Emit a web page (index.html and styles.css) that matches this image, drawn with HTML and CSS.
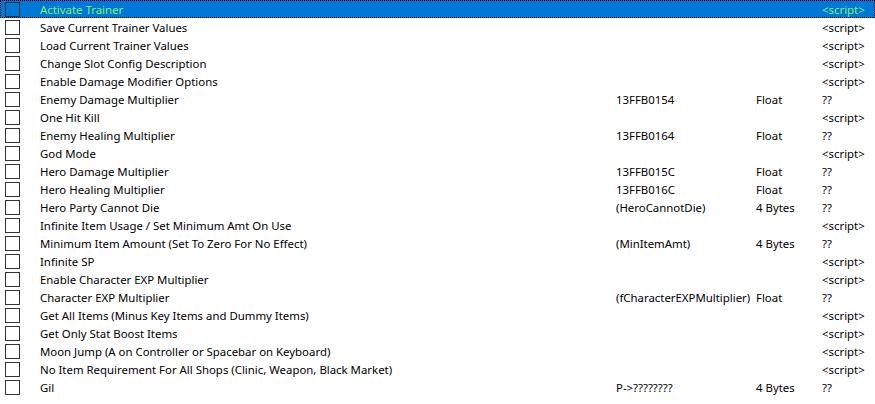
FILE: index.html
```html
<!DOCTYPE html>
<html>
<head>
<meta name="viewport" content="width=device-width, initial-scale=1">
<link rel="stylesheet" href="styles.css">
</head>
<body>
<div class="table">
  <div class="row selected"><span class="box"></span><span>Activate Trainer</span><span></span><span></span><span>&lt;script&gt;</span></div>
  <div class="row"><span class="box"></span><span>Save Current Trainer Values</span><span></span><span></span><span>&lt;script&gt;</span></div>
  <div class="row"><span class="box"></span><span>Load Current Trainer Values</span><span></span><span></span><span>&lt;script&gt;</span></div>
  <div class="row"><span class="box"></span><span>Change Slot Config Description</span><span></span><span></span><span>&lt;script&gt;</span></div>
  <div class="row"><span class="box"></span><span>Enable Damage Modifier Options</span><span></span><span></span><span>&lt;script&gt;</span></div>
  <div class="row"><span class="box"></span><span>Enemy Damage Multiplier</span><span>13FFB0154</span><span>Float</span><span>??</span></div>
  <div class="row"><span class="box"></span><span>One Hit Kill</span><span></span><span></span><span>&lt;script&gt;</span></div>
  <div class="row"><span class="box"></span><span>Enemy Healing Multiplier</span><span>13FFB0164</span><span>Float</span><span>??</span></div>
  <div class="row"><span class="box"></span><span>God Mode</span><span></span><span></span><span>&lt;script&gt;</span></div>
  <div class="row"><span class="box"></span><span>Hero Damage Multiplier</span><span>13FFB015C</span><span>Float</span><span>??</span></div>
  <div class="row"><span class="box"></span><span>Hero Healing Multiplier</span><span>13FFB016C</span><span>Float</span><span>??</span></div>
  <div class="row"><span class="box"></span><span>Hero Party Cannot Die</span><span>(HeroCannotDie)</span><span>4 Bytes</span><span>??</span></div>
  <div class="row"><span class="box"></span><span>Infinite Item Usage / Set Minimum Amt On Use</span><span></span><span></span><span>&lt;script&gt;</span></div>
  <div class="row"><span class="box"></span><span>Minimum Item Amount (Set To Zero For No Effect)</span><span>(MinItemAmt)</span><span>4 Bytes</span><span>??</span></div>
  <div class="row"><span class="box"></span><span>Infinite SP</span><span></span><span></span><span>&lt;script&gt;</span></div>
  <div class="row"><span class="box"></span><span>Enable Character EXP Multiplier</span><span></span><span></span><span>&lt;script&gt;</span></div>
  <div class="row"><span class="box"></span><span>Character EXP Multiplier</span><span>(fCharacterEXPMultiplier)</span><span>Float</span><span>??</span></div>
  <div class="row"><span class="box"></span><span>Get All Items (Minus Key Items and Dummy Items)</span><span></span><span></span><span>&lt;script&gt;</span></div>
  <div class="row"><span class="box"></span><span>Get Only Stat Boost Items</span><span></span><span></span><span>&lt;script&gt;</span></div>
  <div class="row"><span class="box"></span><span>Moon Jump (A on Controller or Spacebar on Keyboard)</span><span></span><span></span><span>&lt;script&gt;</span></div>
  <div class="row"><span class="box"></span><span>No Item Requirement For All Shops (Clinic, Weapon, Black Market)</span><span></span><span></span><span>&lt;script&gt;</span></div>
  <div class="row"><span class="box"></span><span>Gil</span><span>P-&gt;????????</span><span>4 Bytes</span><span>??</span></div>
</div>
</body>
</html>
```

FILE: styles.css
```css
* {
  box-sizing: border-box;
}

body {
  margin: 0;
  background-color: #fff;
  font: 11.4px "Noto Sans", sans-serif;
  color: #000;
}

.table {
  width: 875px;
}

.row {
  display: grid;
  grid-template-columns: 40px 576px 140px 66px 1fr;
  align-items: center;
  height: 18px;
  white-space: nowrap;
}

.row span {
  overflow: hidden;
}

.box {
  width: 15px;
  height: 15px;
  margin-left: 5px;
  border: 1px solid #333;
  background: #fff;
}

.selected {
  background-color: #0078d7;
  color: #80f060;
  outline: 1px dotted #000;
  outline-offset: -1px;
}

.selected .box {
  background: #0078d7;
}
```
